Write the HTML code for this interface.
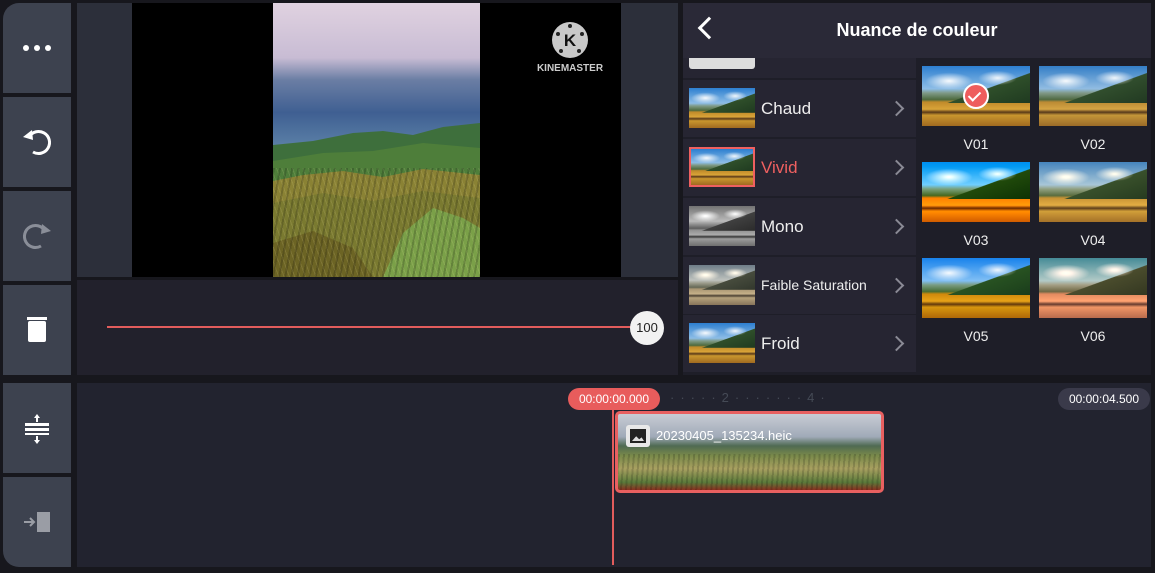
<!DOCTYPE html>
<html><head><meta charset="utf-8"><style>
*{margin:0;padding:0;box-sizing:border-box}
body{width:1155px;height:573px;background:#17171d;position:relative;overflow:hidden;font-family:"Liberation Sans",sans-serif;color:#fff}
.a{position:absolute}
.btn{position:absolute;left:3px;width:68px;background:#3d424f;display:flex;align-items:center;justify-content:center}
.ls{position:absolute;background:
 radial-gradient(ellipse 22% 14% at 25% 25%,rgba(255,255,255,.95),rgba(255,255,255,0) 100%),
 radial-gradient(ellipse 18% 12% at 70% 20%,rgba(255,255,255,.9),rgba(255,255,255,0) 100%),
 linear-gradient(160deg,transparent 60%,#2f4f2a 61%,#1f3a20 100%) 0 0/100% 62% no-repeat,
 linear-gradient(to bottom,#2d7fd0 0%,#8dbde6 38%,#7f9a86 45%,#4d6a3e 56%,#c08a2a 60%,#d9a438 72%,#5a3a18 77%,#c9962e 82%,#a06a20 100%)}
.gray{filter:grayscale(1) contrast(1.1)}
.faible{filter:saturate(.35) sepia(.3)}
.row{position:absolute;left:683px;width:233px;height:57px;background:#262532}
.row .ls{left:6px;top:8px;width:66px;height:40px}
.row .t{position:absolute;left:78px;top:0;line-height:57px;font-size:17px;color:#eee}
.row .c{position:absolute;left:208px;top:23px;width:11px;height:11px;border-right:2px solid #8a8a95;border-top:2px solid #8a8a95;transform:rotate(45deg)}
.g{width:108px;height:60px}
.lab{position:absolute;width:108px;text-align:center;font-size:14px;color:#eee}
</style></head><body>
<div class="btn" style="top:3px;height:90px;border-top-left-radius:16px"><svg width="30" height="8"><circle cx="4" cy="4" r="3" fill="#fff"/><circle cx="15" cy="4" r="3" fill="#fff"/><circle cx="26" cy="4" r="3" fill="#fff"/></svg></div>
<div class="btn" style="top:97px;height:90px"><svg width="34" height="34" viewBox="0 0 34 34"><path d="M9 12 A11 11 0 1 1 13 27" fill="none" stroke="#fff" stroke-width="3"/><path d="M3 12 L12 5 L13 15 Z" fill="#fff"/></svg></div>
<div class="btn" style="top:191px;height:90px"><svg width="34" height="34" viewBox="0 0 34 34"><path d="M25 12 A11 11 0 1 0 21 27" fill="none" stroke="#8a8e98" stroke-width="3"/><path d="M31 12 L22 5 L21 15 Z" fill="#8a8e98"/></svg></div>
<div class="btn" style="top:285px;height:90px"><svg width="24" height="28" viewBox="0 0 24 28"><rect x="2" y="1" width="20" height="3" fill="#fff"/><rect x="3" y="5" width="18" height="21" rx="2" fill="#fff"/></svg></div>
<div class="btn" style="top:383px;height:90px"><svg width="26" height="34" viewBox="0 0 26 34"><rect x="1" y="12" width="24" height="3" fill="#fff"/><rect x="1" y="17" width="24" height="3" fill="#fff"/><rect x="1" y="22" width="24" height="2" fill="#fff"/><path d="M13 3 L10 7 H16Z M13 33 L10 29 H16Z" fill="#fff"/><rect x="12" y="6" width="2" height="5" fill="#fff"/><rect x="12" y="25" width="2" height="5" fill="#fff"/></svg></div>
<div class="btn" style="top:477px;height:90px;border-bottom-left-radius:16px"><svg width="30" height="24" viewBox="0 0 30 24"><rect x="15" y="2" width="13" height="20" fill="#9a9da5"/><path d="M2 12 H11 M8 8 L12 12 L8 16" fill="none" stroke="#9a9da5" stroke-width="2"/></svg></div>
<div class="a" style="left:77px;top:3px;width:601px;height:274px;background:#2c2f3a"></div>
<div class="a" style="left:132px;top:3px;width:489px;height:274px;background:#000"></div>
<div class="a" style="left:273px;top:3px;width:207px;height:274px;overflow:hidden;background:linear-gradient(to bottom,#e0d2e0 0%,#c8bcd4 20%,#6b7ea4 28%,#3f5f92 40%,#5a7fa6 52%,#6e90aa 56%)">
<svg class="a" style="left:0;top:0" width="207" height="274" viewBox="0 0 207 274"><path d="M0 142 L40 138 L80 130 L110 128 L140 132 L170 124 L207 120 V274 H0Z" fill="#3e6f3c"/><path d="M0 158 L50 150 L100 148 L150 140 L207 145 V274 H0Z" fill="#4e7e3a"/><path d="M0 178 L30 172 L70 168 L110 174 L150 166 L207 172 V274 H0Z" fill="#8a8234"/><path d="M0 200 L50 190 L100 198 L150 188 L207 195 V274 H0Z" fill="#7a7a30"/><path d="M110 274 L130 230 L160 205 L190 215 L207 225 V274Z" fill="#7aa048"/><path d="M0 240 L40 228 L80 245 L100 274 H0Z" fill="#6c6424"/></svg>
<div class="a" style="left:0;top:165px;width:207px;height:109px;background:repeating-linear-gradient(100deg,rgba(0,0,0,.18) 0 2px,transparent 2px 6px),repeating-linear-gradient(70deg,rgba(255,240,180,.12) 0 1px,transparent 1px 5px)"></div></div>
<svg class="a" style="left:552px;top:22px" width="36" height="36"><circle cx="18" cy="18" r="18" fill="#c9c9c9"/><text x="18" y="24" text-anchor="middle" font-size="17" font-weight="bold" fill="#111" font-family="Liberation Sans">K</text><circle cx="18" cy="4" r="2" fill="#222"/><circle cx="6" cy="12" r="2" fill="#222"/><circle cx="30" cy="12" r="2" fill="#222"/><circle cx="9" cy="29" r="2" fill="#222"/><circle cx="27" cy="29" r="2" fill="#222"/></svg>
<div class="a" style="left:530px;top:63px;width:80px;text-align:center;font-size:10px;font-weight:bold;color:#ccc">KINEMASTER</div>
<div class="a" style="left:77px;top:280px;width:601px;height:95px;background:#22212c"></div>
<div class="a" style="left:107px;top:326px;width:530px;height:2px;background:#e25c5c"></div>
<div class="a" style="left:630px;top:311px;width:34px;height:34px;border-radius:50%;background:#f2f2f2;color:#222;font-size:13px;line-height:34px;text-align:center">100</div>
<div class="a" style="left:683px;top:3px;width:468px;height:372px;background:#1e1e28"></div>
<div class="a" style="left:683px;top:3px;width:468px;height:55px;background:#2a2937"></div>
<div class="a" style="left:701px;top:20px;width:16px;height:16px;border-left:3px solid #fff;border-bottom:3px solid #fff;transform:rotate(45deg)"></div>
<div class="a" style="left:683px;top:3px;width:468px;line-height:55px;text-align:center;font-size:18px;font-weight:bold">Nuance de couleur</div>
<div class="row" style="top:58px;height:20px"><div class="a" style="left:6px;top:0;width:66px;height:11px;background:#ddd;border-radius:0 0 3px 3px"></div></div>
<div class="row" style="top:80px"><div class="ls"></div><div class="t">Chaud</div><div class="c"></div></div>
<div class="row" style="top:139px"><div class="ls" style="border:2px solid #ef6060"></div><div class="t" style="color:#ef6060">Vivid</div><div class="c"></div></div>
<div class="row" style="top:198px"><div class="ls gray"></div><div class="t">Mono</div><div class="c"></div></div>
<div class="row" style="top:257px"><div class="ls faible"></div><div class="t" style="font-size:14px">Faible Saturation</div><div class="c"></div></div>
<div class="row" style="top:315px"><div class="ls"></div><div class="t">Froid</div><div class="c"></div></div>
<div class="ls g" style="left:922px;top:66px"></div>
<div class="a" style="left:963px;top:83px;width:26px;height:26px;border-radius:50%;background:#ee5d5d;border:2px solid #fff"><div class="a" style="left:6px;top:4px;width:7px;height:12px;border-right:2px solid #fff;border-bottom:2px solid #fff;transform:rotate(45deg)"></div></div>
<div class="ls g" style="left:1039px;top:66px;filter:saturate(.9)"></div>
<div class="ls g" style="left:922px;top:162px;filter:saturate(1.4) hue-rotate(-10deg) contrast(1.15)"></div>
<div class="ls g" style="left:1039px;top:162px;filter:sepia(.3) saturate(1.2)"></div>
<div class="ls g" style="left:922px;top:258px;filter:saturate(1.3)"></div>
<div class="ls g" style="left:1039px;top:258px;filter:sepia(.4) hue-rotate(-25deg) saturate(1.1)"></div>
<div class="lab" style="left:922px;top:136px">V01</div><div class="lab" style="left:1039px;top:136px">V02</div>
<div class="lab" style="left:922px;top:232px">V03</div><div class="lab" style="left:1039px;top:232px">V04</div>
<div class="lab" style="left:922px;top:328px">V05</div><div class="lab" style="left:1039px;top:328px">V06</div>
<div class="a" style="left:77px;top:383px;width:1074px;height:184px;background:#22232f"></div>
<div class="a" style="left:670px;top:390px;width:200px;font-size:13px;color:#454a56;letter-spacing:6px">·····2·······4·</div>
<div class="a" style="left:612px;top:405px;width:2px;height:160px;background:#e25c5c"></div>
<div class="a" style="left:568px;top:388px;width:92px;height:22px;border-radius:11px;background:#e85c5c;font-size:12px;line-height:22px;text-align:center">00:00:00.000</div>
<div class="a" style="left:1058px;top:388px;width:92px;height:22px;border-radius:11px;background:#3a3a4a;font-size:12px;line-height:22px;text-align:center">00:00:04.500</div>
<div class="a" style="left:615px;top:411px;width:269px;height:82px;border:3px solid #e86060;border-radius:5px;overflow:hidden;background:repeating-linear-gradient(95deg,rgba(0,0,0,.15) 0 2px,transparent 2px 5px) 0 40px/100% 40px no-repeat,linear-gradient(to bottom,#c8ccd4 0%,#a0aab8 30%,#4f6a52 42%,#7a8a4a 55%,#a8a060 72%,#5a7a3a 90%,#8a3020 100%)"></div>
<div class="a" style="left:626px;top:425px;width:24px;height:22px;background:#e8e8e8;border-radius:3px"><div class="a" style="left:4px;top:4px;width:16px;height:14px;background:#222"></div><div class="a" style="left:6px;top:10px;width:12px;height:6px;background:#ddd;clip-path:polygon(0 100%,35% 20%,60% 70%,80% 40%,100% 100%)"></div></div>
<div class="a" style="left:656px;top:428px;font-size:13px;color:#fff">20230405_135234.heic</div>
</body></html>
